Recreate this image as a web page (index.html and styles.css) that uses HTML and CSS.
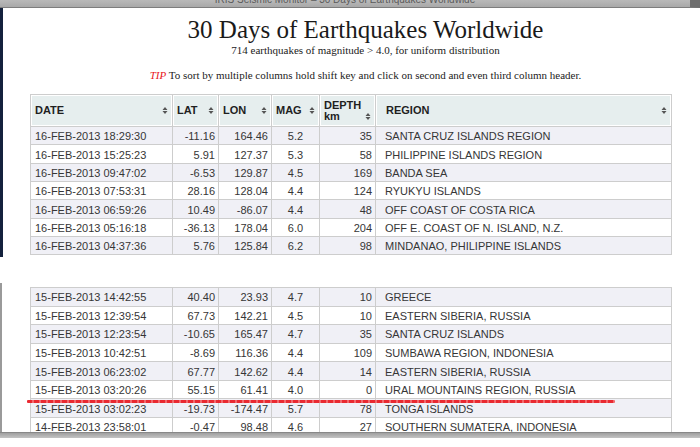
FILE: index.html
```html
<!DOCTYPE html>
<html>
<head>
<meta charset="utf-8">
<title>IRIS Seismic Monitor – 30 Days of Earthquakes Worldwide</title>
<link rel="stylesheet" href="styles.css">
</head>
<body>
<div class="titlebar"><span class="titletext">IRIS Seismic Monitor – 30 Days of Earthquakes Worldwide</span></div>
<div class="page page-top">
  <header class="heading">
    <h1 class="title">30 Days of Earthquakes Worldwide</h1>
    <p class="subtitle">714 earthquakes of magnitude &gt; 4.0, for uniform distribution</p>
    <p class="tip"><em class="tip-label">TIP</em> To sort by multiple columns hold shift key and click on second and even third column header.</p>
  </header>
  <table class="quakes">
    <thead>
      <tr>
        <th class="c-date"><div class="th-in"><span>DATE</span><svg class="arrow" viewBox="0 0 6 9" width="6" height="9"><path d="M3 1 L5.5 4 H0.5 Z M3 8 L5.5 5 H0.5 Z"/></svg></div></th>
        <th class="c-lat"><div class="th-in"><span>LAT</span><svg class="arrow" viewBox="0 0 6 9" width="6" height="9"><path d="M3 1 L5.5 4 H0.5 Z M3 8 L5.5 5 H0.5 Z"/></svg></div></th>
        <th class="c-lon"><div class="th-in"><span>LON</span><svg class="arrow" viewBox="0 0 6 9" width="6" height="9"><path d="M3 1 L5.5 4 H0.5 Z M3 8 L5.5 5 H0.5 Z"/></svg></div></th>
        <th class="c-mag"><div class="th-in"><span>MAG</span><svg class="arrow" viewBox="0 0 6 9" width="6" height="9"><path d="M3 1 L5.5 4 H0.5 Z M3 8 L5.5 5 H0.5 Z"/></svg></div></th>
        <th class="c-depth"><div class="th-in"><span class="two-line">DEPTH<br>km</span><svg class="arrow arrow-low" viewBox="0 0 6 9" width="6" height="9"><path d="M3 1 L5.5 4 H0.5 Z M3 8 L5.5 5 H0.5 Z"/></svg></div></th>
        <th class="c-region"><div class="th-in"><span>REGION</span><svg class="arrow" viewBox="0 0 6 9" width="6" height="9"><path d="M3 1 L5.5 4 H0.5 Z M3 8 L5.5 5 H0.5 Z"/></svg></div></th>
      </tr>
    </thead>
    <tbody>
      <tr class="odd"><td>16-FEB-2013 18:29:30</td><td class="num">-11.16</td><td class="num">164.46</td><td class="mag">5.2</td><td class="num">35</td><td class="region">SANTA CRUZ ISLANDS REGION</td></tr>
      <tr><td>16-FEB-2013 15:25:23</td><td class="num">5.91</td><td class="num">127.37</td><td class="mag">5.3</td><td class="num">58</td><td class="region">PHILIPPINE ISLANDS REGION</td></tr>
      <tr class="odd"><td>16-FEB-2013 09:47:02</td><td class="num">-6.53</td><td class="num">129.87</td><td class="mag">4.5</td><td class="num">169</td><td class="region">BANDA SEA</td></tr>
      <tr><td>16-FEB-2013 07:53:31</td><td class="num">28.16</td><td class="num">128.04</td><td class="mag">4.4</td><td class="num">124</td><td class="region">RYUKYU ISLANDS</td></tr>
      <tr class="odd"><td>16-FEB-2013 06:59:26</td><td class="num">10.49</td><td class="num">-86.07</td><td class="mag">4.4</td><td class="num">48</td><td class="region">OFF COAST OF COSTA RICA</td></tr>
      <tr><td>16-FEB-2013 05:16:18</td><td class="num">-36.13</td><td class="num">178.04</td><td class="mag">6.0</td><td class="num">204</td><td class="region">OFF E. COAST OF N. ISLAND, N.Z.</td></tr>
      <tr class="odd"><td>16-FEB-2013 04:37:36</td><td class="num">5.76</td><td class="num">125.84</td><td class="mag">6.2</td><td class="num">98</td><td class="region">MINDANAO, PHILIPPINE ISLANDS</td></tr>
    </tbody>
  </table>
</div>
<div class="gap"></div>
<div class="page page-bottom">
  <table class="quakes quakes-cont">
    <colgroup><col class="c-date"><col class="c-lat"><col class="c-lon"><col class="c-mag"><col class="c-depth"><col class="c-region"></colgroup>
    <tbody>
      <tr class="odd"><td>15-FEB-2013 14:42:55</td><td class="num">40.40</td><td class="num">23.93</td><td class="mag">4.7</td><td class="num">10</td><td class="region">GREECE</td></tr>
      <tr><td>15-FEB-2013 12:39:54</td><td class="num">67.73</td><td class="num">142.21</td><td class="mag">4.5</td><td class="num">10</td><td class="region">EASTERN SIBERIA, RUSSIA</td></tr>
      <tr class="odd"><td>15-FEB-2013 12:23:54</td><td class="num">-10.65</td><td class="num">165.47</td><td class="mag">4.7</td><td class="num">35</td><td class="region">SANTA CRUZ ISLANDS</td></tr>
      <tr><td>15-FEB-2013 10:42:51</td><td class="num">-8.69</td><td class="num">116.36</td><td class="mag">4.4</td><td class="num">109</td><td class="region">SUMBAWA REGION, INDONESIA</td></tr>
      <tr class="odd"><td>15-FEB-2013 06:23:02</td><td class="num">67.77</td><td class="num">142.62</td><td class="mag">4.4</td><td class="num">14</td><td class="region">EASTERN SIBERIA, RUSSIA</td></tr>
      <tr><td>15-FEB-2013 03:20:26</td><td class="num">55.15</td><td class="num">61.41</td><td class="mag">4.0</td><td class="num">0</td><td class="region">URAL MOUNTAINS REGION, RUSSIA</td></tr>
      <tr class="odd"><td>15-FEB-2013 03:02:23</td><td class="num">-19.73</td><td class="num">-174.47</td><td class="mag">5.7</td><td class="num">78</td><td class="region">TONGA ISLANDS</td></tr>
      <tr><td>14-FEB-2013 23:58:01</td><td class="num">-0.47</td><td class="num">98.48</td><td class="mag">4.6</td><td class="num">27</td><td class="region">SOUTHERN SUMATERA, INDONESIA</td></tr>
    </tbody>
  </table>
  <div class="redline"></div>
</div>
<div class="bottombar"></div>
</body>
</html>
```
FILE: styles.css
```css
html, body {
  margin: 0;
  padding: 0;
  background: #fff;
}
body {
  width: 700px;
  height: 447px;
  overflow: hidden;
  font-family: "Liberation Sans", Arial, sans-serif;
}
.titlebar {
  height: 7px;
  overflow: hidden;
  background: linear-gradient(#b9b9b9, #a9a9a9);
  border-bottom: 1px solid #7d7d7d;
  border-right: 10px solid #6e6e6e;
  text-align: center;
}
.titletext {
  display: block;
  margin-top: -6px;
  font-size: 10px;
  line-height: 12px;
  color: #5a5a5a;
}
.page {
  overflow: hidden;
  position: relative;
}
.page-top {
  height: 249px;
  border-left: 3px solid #14213d;
  box-sizing: border-box;
}
.heading {
  padding-left: 28px;
  font-family: "Liberation Serif", "Times New Roman", serif;
  color: #222;
  text-align: center;
}
.title {
  margin: 8px 0 0;
  font-weight: normal;
  font-size: 25px;
  line-height: 27px;
  color: #1a1a1a;
}
.subtitle {
  margin: 0;
  font-size: 11px;
  line-height: 14px;
}
.tip {
  margin: 11px 0 0;
  font-size: 11px;
  line-height: 14px;
}
.tip-label {
  color: #e8151b;
}
.quakes {
  margin: 12px 0 0 27px;
  width: 642px;
  table-layout: fixed;
  border-collapse: separate;
  border-spacing: 1px;
  background: #cdcdcd;
  font-size: 11px;
  text-align: left;
}
.quakes th {
  background: #e6eeee;
  border: 1px solid #fff;
  padding: 3px 3px;
  height: 31px;
  font-weight: bold;
  font-size: 11px;
  line-height: 11px;
  color: #1f1f1f;
  box-sizing: border-box;
  vertical-align: middle;
}
.th-in {
  display: flex;
  align-items: center;
  justify-content: space-between;
}
.two-line {
  padding-top: 1px;
}
.arrow {
  fill: #555;
  flex: none;
}
.arrow-low {
  align-self: flex-end;
  margin-bottom: 1px;
}
.c-date { width: 141px; }
.c-lat { width: 45px; }
.c-lon { width: 52px; }
.c-mag { width: 47px; }
.c-depth { width: 55px; }
.c-region { width: 295px; }
.quakes th.c-region { padding-left: 9px; }
.quakes td {
  background: #fff;
  color: #363636;
  padding: 3px 4px 1px;
  height: 17.35px;
  box-sizing: border-box;
  line-height: 13px;
  white-space: nowrap;
  overflow: hidden;
}
.quakes tr.odd td {
  background: #f0f0f6;
}
.quakes td.num { text-align: right; padding-right: 3px; }
.quakes td.mag { text-align: center; }
.quakes td.region { padding-left: 9px; }
.gap {
  height: 26px;
}
.page-bottom {
  height: 149px;
  border-left: 2px solid #9a9a9a;
  box-sizing: border-box;
}
.quakes-cont {
  margin: 4px 0 0 28px;
}
.quakes-cont td {
  height: 17.57px;
}
.redline {
  position: absolute;
  left: 25px;
  top: 117px;
  width: 588px;
  height: 3px;
  border-radius: 1px;
  background: repeating-linear-gradient(90deg, #e8131b 0 5px, #f25a5e 5px 7px);
  opacity: 0.9;
}
.bottombar {
  height: 5px;
  background: linear-gradient(#9f9f9f, #c4c4c4);
  border-top: 1px solid #888;
}
```
